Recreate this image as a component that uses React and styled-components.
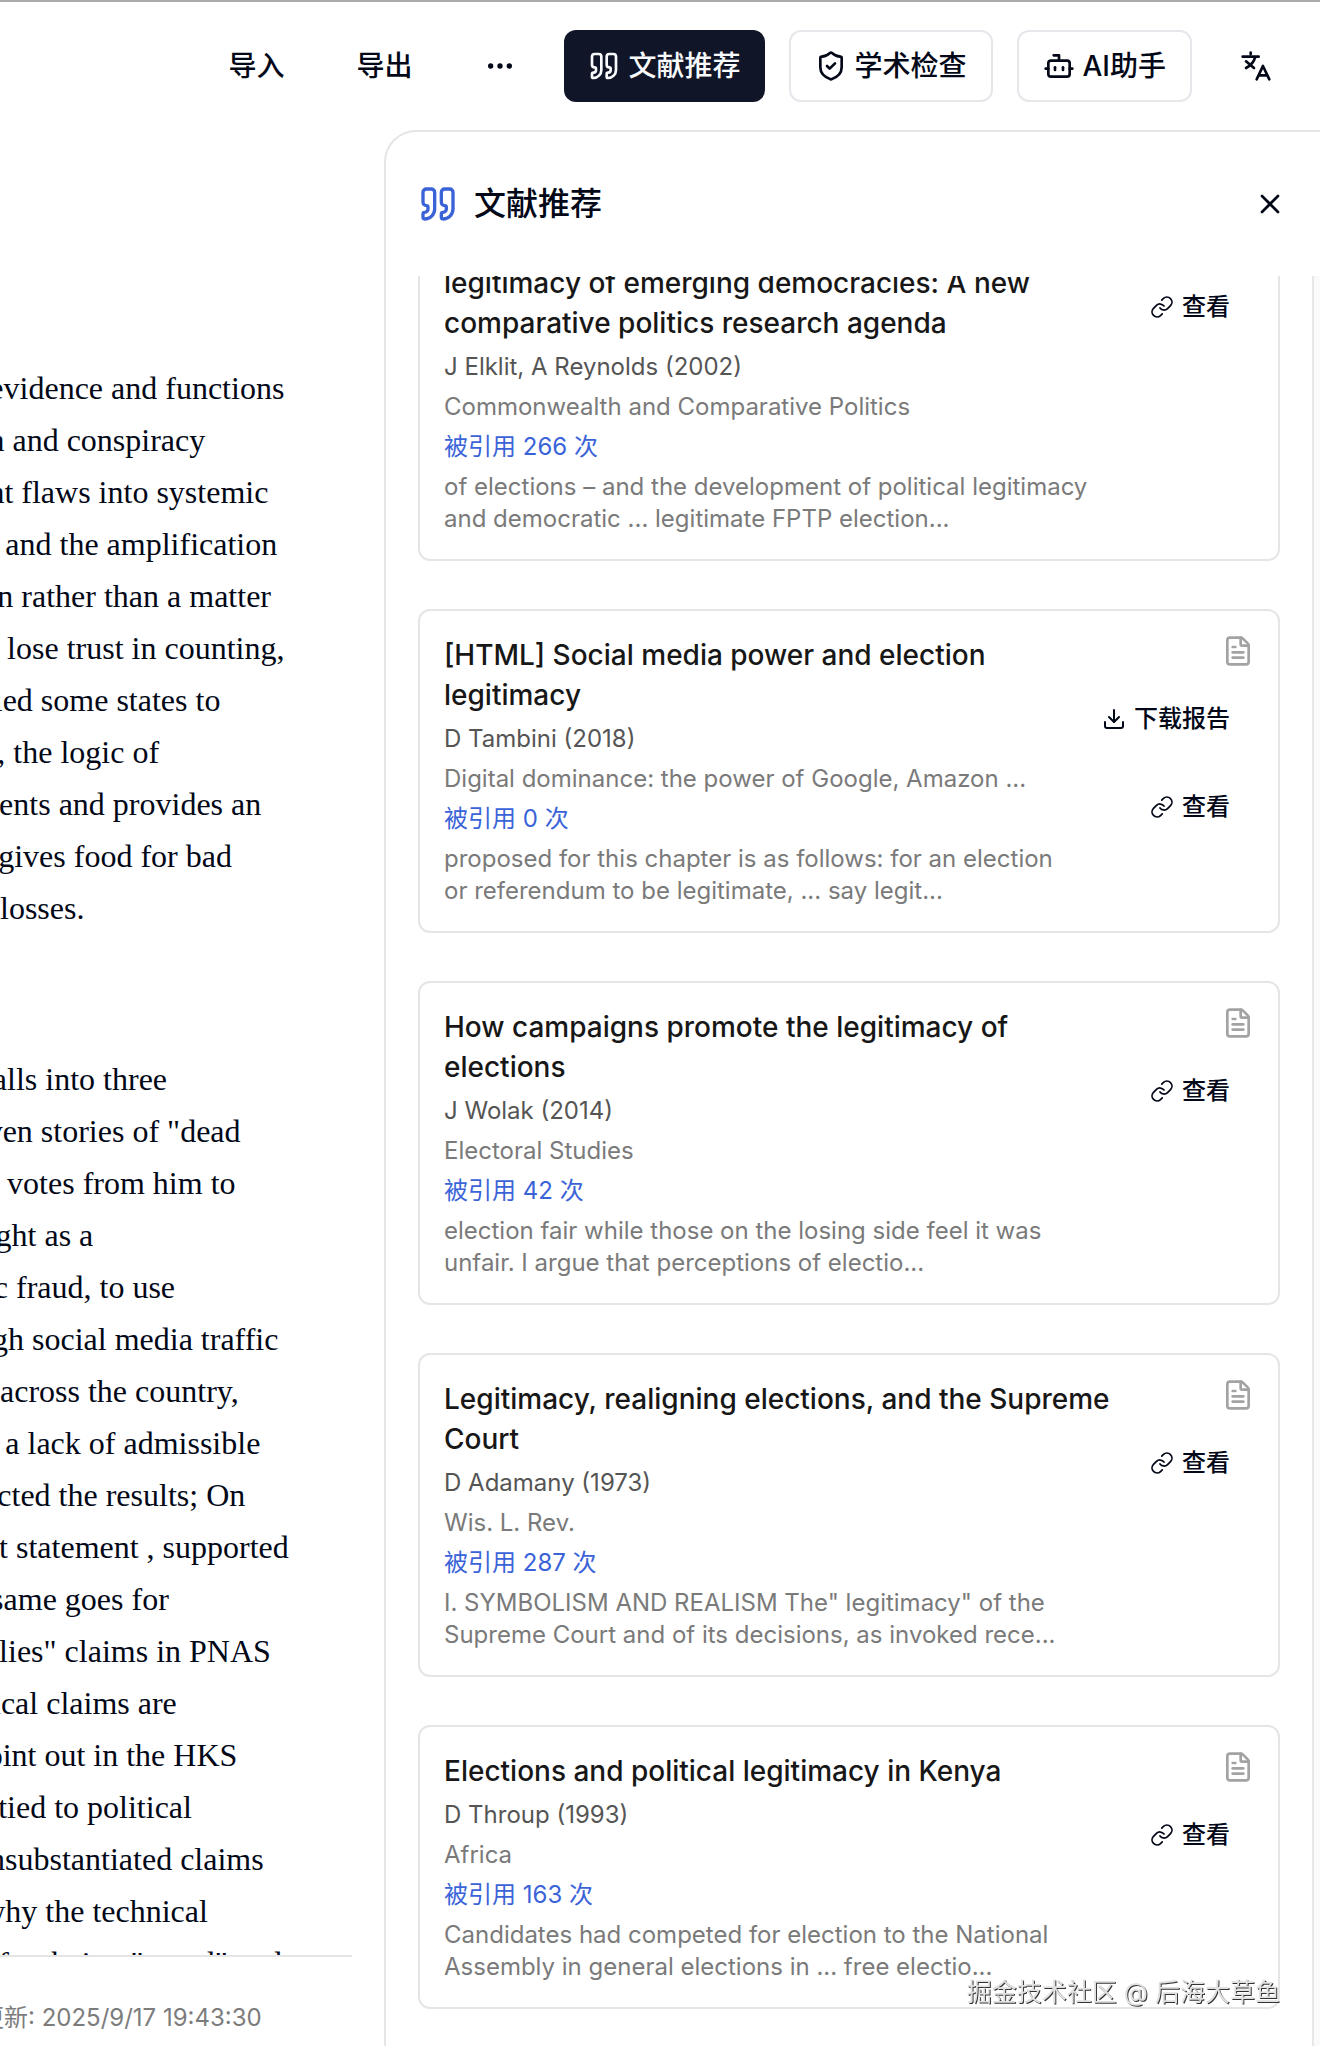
import { useLayoutEffect, useRef } from 'react'
import styled, { createGlobalStyle } from 'styled-components'
import { Quote, ShieldCheck, Bot, Ellipsis, X, FileText, Download, Link } from 'lucide-react'

const GlobalStyle = createGlobalStyle`
    * {
        box-sizing: border-box;
    }

    body {
        margin: 0;
        background: #fff;
        color: #020817;
        font-family: Inter, 'Noto Sans CJK SC', sans-serif;
        overflow: hidden;
    }

    h2, h3, p {
        margin: 0;
    }

    button {
        font: inherit;
        color: inherit;
        cursor: pointer;
    }

    svg {
        display: block;
        flex: none;
    }
`

const Page = styled.div`
    height: 100vh;
    display: flex;
    flex-direction: column;
    border-top: 2px solid #ababab;
    overflow: hidden;
`

const Toolbar = styled.header`
    display: flex;
    justify-content: flex-end;
    align-items: center;
    gap: 24px;
    padding: 28px 24px;
`

const ToolButton = styled.button`
    height: 72px;
    display: flex;
    align-items: center;
    gap: 8px;
    padding: 0 24px;
    border: ${props => props.$outline ? '2px solid #e5e7eb' : 'none'};
    border-radius: 12px;
    background: ${props => props.$active ? '#111528' : 'transparent'};
    color: ${props => props.$active ? '#f8fafc' : '#020817'};
    font-size: 28px;
    font-weight: 500;
    line-height: 40px;
    white-space: nowrap;
`

const Workspace = styled.div`
    flex: 1;
    min-height: 0;
    display: flex;
    justify-content: space-between;
`

/* the document is wider than the space left of the panel */
const Editor = styled.main`
    width: 420px;
    margin-left: -68px;
    display: flex;
    flex-direction: column;
`

const Document = styled.article`
    flex: 1;
    min-height: 0;
    overflow: hidden;
    display: flex;
    flex-direction: column;
    gap: 119px;
    padding: 232px 0 0 28px;
    font-family: 'Liberation Serif', 'Times New Roman', serif;
    font-size: 32px;
    line-height: 52px;

    p {
        flex: none;
        white-space: pre;
    }
`

const StatusBar = styled.footer`
    height: 91px;
    display: flex;
    align-items: center;
    padding-top: 32px;
    border-top: 2px solid #e5e5e5;
    color: #7c7c7c;
    font-size: 24px;
    line-height: 32px;
    white-space: pre;
`

const Panel = styled.aside`
    width: 936px;
    display: flex;
    flex-direction: column;
    border: solid #e5e5e5;
    border-width: 2px 0 0 2px;
    border-top-left-radius: 32px;
    background: #fff;
`

const PanelHeader = styled.div`
    height: 144px;
    flex: none;
    display: flex;
    align-items: center;
    gap: 16px;
    padding: 0 34px 0 32px;

    .mark {
        color: #3b63d8;
    }

    h2 {
        flex: 1;
        font-size: 32px;
        font-weight: 500;
        line-height: 40px;
    }
`

const CloseButton = styled.button`
    padding: 0;
    border: none;
    background: none;
`

const PanelBody = styled.div`
    flex: 1;
    min-height: 0;
    display: flex;
`

const List = styled.div`
    flex: 1;
    overflow: hidden;
    display: flex;
    flex-direction: column;
    gap: 48px;
    padding: 0 32px 48px;
`

const Track = styled.div`
    width: 8px;
    border-left: 2px solid #e8e8e8;
    background: #fafafa;
`

const Card = styled.section`
    flex: none;
    display: flex;
    justify-content: space-between;
    padding: 24px;
    border: 2px solid #e5e5e5;
    border-radius: 12px;
`

const Info = styled.div`
    display: flex;
    flex-direction: column;
    gap: 8px;
    font-size: 24px;
    line-height: 32px;
    color: #7a7a7a;
    white-space: pre;

    h3 {
        color: #171717;
        font-size: 28px;
        font-weight: 500;
        line-height: 40px;
    }

    .author {
        color: #555;
    }

    .cited {
        color: #3b63d8;
    }
`

const Actions = styled.div`
    width: 0;
    display: flex;
    flex-direction: column;
    align-items: flex-end;
    gap: 16px;

    .file {
        color: #a3a3a3;
    }
`

const ActionButton = styled.button`
    height: 72px;
    display: flex;
    align-items: center;
    gap: 8px;
    padding: 0 24px;
    border: none;
    background: none;
    font-size: 24px;
    font-weight: 500;
    line-height: 32px;
    white-space: nowrap;
`

const Watermark = styled.div`
    position: fixed;
    right: 40px;
    bottom: 36px;
    color: #e0e0e0;
    font-size: 25px;
    line-height: 36px;
    text-shadow: 1px 1px 0 #333;
    pointer-events: none;
`

const paragraphs = [
    [
        'is evidence and functions',
        'son and conspiracy',
        'cent flaws into systemic',
        'ers and the amplification',
        'sion rather than a matter',
        'ple lose trust in counting,',
        'relied some states to',
        'ers, the logic of',
        'ements and provides an',
        'ch gives food for bad',
        'nd losses.',
    ],
    [
        'e falls into three',
        'roven stories of "dead',
        'ted votes from him to',
        'bright as a',
        'blic fraud, to use',
        'ough social media traffic',
        'nd across the country,',
        '(of a lack of admissible',
        'elected the results; On',
        'tent statement , supported',
        'at same goes for',
        'malies" claims in PNAS',
        'ogical claims are',
        '-point out in the HKS',
        'be tied to political',
        '"unsubstantiated claims',
        'e why the technical',
        'e of or being "voted" and',
    ],
]

const papers = [
    {
        title: 'The impact of election administration on the\nlegitimacy of emerging democracies: A new\ncomparative politics research agenda',
        author: 'J Elklit, A Reynolds (2002)',
        source: 'Commonwealth and Comparative Politics',
        cited: 266,
        summary: 'of elections – and the development of political legitimacy\nand democratic ... legitimate FPTP election...',
    },
    {
        title: '[HTML] Social media power and election\nlegitimacy',
        author: 'D Tambini (2018)',
        source: 'Digital dominance: the power of Google, Amazon ...',
        cited: 0,
        summary: 'proposed for this chapter is as follows: for an election\nor referendum to be legitimate, ... say legit...',
        report: true,
    },
    {
        title: 'How campaigns promote the legitimacy of\nelections',
        author: 'J Wolak (2014)',
        source: 'Electoral Studies',
        cited: 42,
        summary: 'election fair while those on the losing side feel it was\nunfair. I argue that perceptions of electio...',
    },
    {
        title: 'Legitimacy, realigning elections, and the Supreme\nCourt',
        author: 'D Adamany (1973)',
        source: 'Wis. L. Rev.',
        cited: 287,
        summary: 'I. SYMBOLISM AND REALISM The" legitimacy" of the\nSupreme Court and of its decisions, as invoked rece...',
    },
    {
        title: 'Elections and political legitimacy in Kenya',
        author: 'D Throup (1993)',
        source: 'Africa',
        cited: 163,
        summary: 'Candidates had competed for election to the National\nAssembly in general elections in ... free electio...',
    },
]

function TranslateIcon() {
    return (
        <svg width='32' height='32' viewBox='0 0 24 24' fill='none' stroke='currentColor' strokeWidth='2' strokeLinecap='round' strokeLinejoin='round'>
            <path d='M2 5h12M8 2v1M4.500 8.500l6 5M11.500 5c-1 4-4 7-7 8.500' />
            <path d='m12.500 22 4.700-10 4.800 10M14 19h6.500' />
        </svg>
    )
}

function PaperCard({ paper }) {
    return (
        <Card>
            <Info>
                <h3>{paper.title}</h3>
                <p className='author'>{paper.author}</p>
                <p>{paper.source}</p>
                <p className='cited'>被引用 {paper.cited} 次</p>
                <p>{paper.summary}</p>
            </Info>
            <Actions>
                <FileText className='file' size={32} />
                {paper.report && <ActionButton><Download size={24} />下载报告</ActionButton>}
                <ActionButton><Link size={24} strokeWidth={1.75} />查看</ActionButton>
            </Actions>
        </Card>
    )
}

export default function App() {
    const list = useRef(null)

    useLayoutEffect(() => {
        list.current.scrollTop = 79
    }, [])

    return (
        <>
            <GlobalStyle />
            <Page>
                <Toolbar>
                    <ToolButton>导入</ToolButton>
                    <ToolButton>导出</ToolButton>
                    <ToolButton aria-label='更多'><Ellipsis size={32} /></ToolButton>
                    <ToolButton $active><Quote size={32} />文献推荐</ToolButton>
                    <ToolButton $outline><ShieldCheck size={32} />学术检查</ToolButton>
                    <ToolButton $outline><Bot size={32} />AI助手</ToolButton>
                    <ToolButton aria-label='翻译'><TranslateIcon /></ToolButton>
                </Toolbar>
                <Workspace>
                    <Editor>
                        <Document>
                            {paragraphs.map((lines, i) => <p key={i}>{lines.join('\n')}</p>)}
                        </Document>
                        <StatusBar>最后更新: 2025/9/17 19:43:30</StatusBar>
                    </Editor>
                    <Panel>
                        <PanelHeader>
                            <Quote className='mark' size={40} />
                            <h2>文献推荐</h2>
                            <CloseButton aria-label='关闭'><X size={32} /></CloseButton>
                        </PanelHeader>
                        <PanelBody>
                            <List ref={list}>
                                {papers.map(paper => <PaperCard key={paper.title} paper={paper} />)}
                            </List>
                            <Track />
                        </PanelBody>
                    </Panel>
                </Workspace>
                <Watermark>掘金技术社区 @ 后海大草鱼</Watermark>
            </Page>
        </>
    )
}
